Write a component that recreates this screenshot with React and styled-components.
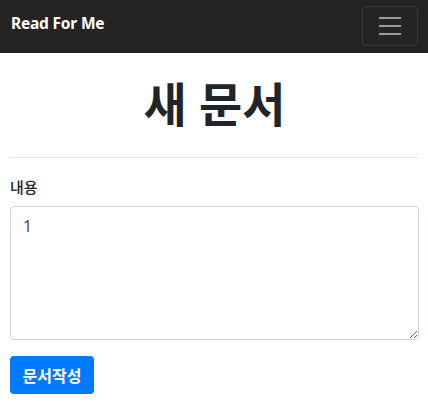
import styled, { createGlobalStyle } from "styled-components";

const GlobalStyle = createGlobalStyle`
    body {
        margin: 0;
        font-family: "Noto Sans", "Noto Sans CJK KR", sans-serif;
        color: #212529;
        background: #fff;
    }
    * { box-sizing: border-box; }
`

export default function App() {
    return (
        <>
            <GlobalStyle />
            <Navbar>
                <Brand>Read For Me</Brand>
                <Toggler aria-label="menu">
                    <svg width="30" height="30" viewBox="0 0 30 30">
                        <path
                            d="M4 7h22M4 15h22M4 23h22"
                            stroke="rgba(255,255,255,0.55)"
                            strokeWidth="2"
                        />
                    </svg>
                </Toggler>
            </Navbar>
            <Container>
                <Title>새 문서</Title>
                <Divider />
                <Label>내용</Label>
                <TextArea defaultValue="1" />
                <SubmitButton>문서작성</SubmitButton>
            </Container>
        </>
    )
}

const Navbar = styled.nav`
    display: flex;
    align-items: center;
    justify-content: space-between;
    height: 53px;
    padding: 0 10px 7px 11px;
    background: #262422;
`

const Brand = styled.a`
    color: #fff;
    font-weight: 700;
    font-size: 15.5px;
    letter-spacing: -0.2px;
`

const Toggler = styled.button`
    display: flex;
    align-items: center;
    justify-content: center;
    width: 56px;
    height: 40px;
    margin-top: 6px;
    background: transparent;
    border: 1px solid rgba(255, 255, 255, 0.1);
    border-radius: 5px;
    padding: 0;
`

const Container = styled.main`
    display: flex;
    flex-direction: column;
    padding: 0 9px 0 10px;
`

const Title = styled.h1`
    text-align: center;
    font-size: 47px;
    font-weight: 700;
    margin: 23px 0 25px;
    line-height: 1.2;
`

const Divider = styled.hr`
    width: 100%;
    border: none;
    border-top: 1px solid #e5e5e5;
    margin: 0 0 18px;
`

const Label = styled.label`
    font-size: 15px;
    font-weight: 500;
    margin-bottom: 9px;
`

const TextArea = styled.textarea`
    width: 100%;
    height: 134px;
    border: 1px solid #ced4da;
    border-radius: 4px;
    padding: 8px 12px;
    font-size: 16px;
    font-family: "Noto Sans", sans-serif;
    color: #495057;
    resize: vertical;
`

const SubmitButton = styled.button`
    align-self: flex-start;
    margin-top: 16px;
    height: 38px;
    padding: 0 12.5px;
    background: #007bff;
    color: #fff;
    border: none;
    border-radius: 4px;
    font-size: 16px;
    font-weight: 700;
    font-family: "Noto Sans", "Noto Sans CJK KR", sans-serif;
`
